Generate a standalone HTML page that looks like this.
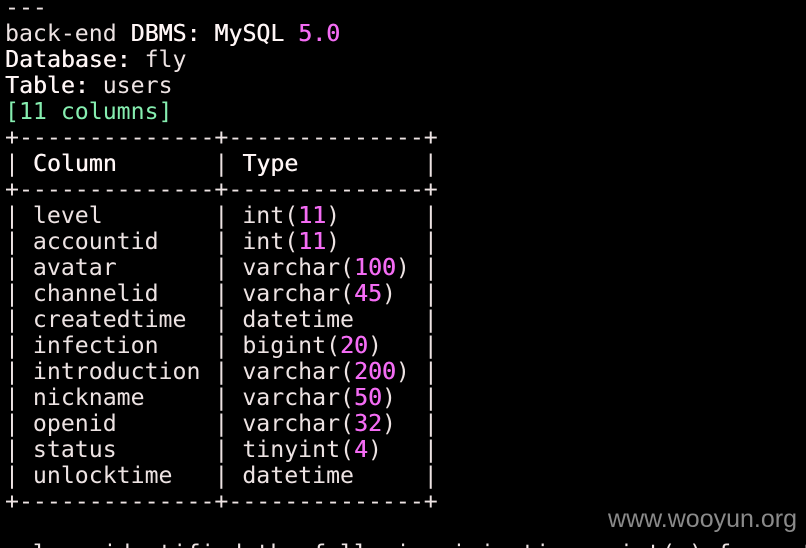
<!DOCTYPE html>
<html><head><meta charset="utf-8"><style>
html,body{margin:0;padding:0;background:#000;width:806px;height:548px;overflow:hidden;position:relative}
pre{position:absolute;left:5px;top:-5px;margin:0;font-family:"DejaVu Sans Mono","Liberation Mono",monospace;font-size:23.2px;line-height:26px;color:#ede3e3}
b{color:#fff6f6;font-weight:normal;text-shadow:0.4px 0 0 #fff6f6}
.m{color:#f46cf4;text-shadow:0.4px 0 0 #f46cf4}
.g{color:#86eeb0}
.w{position:absolute;right:9px;top:505px;font-family:"Liberation Sans",sans-serif;font-size:25px;color:#8a8a8a}
</style></head><body>
<pre>---
back-end <b>DBMS: MySQL</b> <span class="m">5.0</span>
<b>Database:</b> fly
<b>Table:</b> users
<span class="g">[11 columns]</span>
+--------------+--------------+
| <b>Column</b>       | <b>Type</b>         |
+--------------+--------------+
| level        | int(<span class="m">11</span>)      |
| accountid    | int(<span class="m">11</span>)      |
| avatar       | varchar(<span class="m">100</span>) |
| channelid    | varchar(<span class="m">45</span>)  |
| createdtime  | datetime     |
| infection    | bigint(<span class="m">20</span>)   |
| introduction | varchar(<span class="m">200</span>) |
| nickname     | varchar(<span class="m">50</span>)  |
| openid       | varchar(<span class="m">32</span>)  |
| status       | tinyint(<span class="m">4</span>)   |
| unlocktime   | datetime     |
+--------------+--------------+

sqlmap identified the following injection point(s) from st</pre>
<div class="w">www.wooyun.org</div>
</body></html>
